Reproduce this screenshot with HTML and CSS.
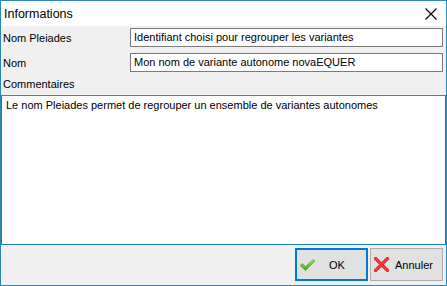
FILE: index.html
```html
<!DOCTYPE html>
<html>
<head>
<meta charset="utf-8">
<link rel="stylesheet" href="styles.css">
</head>
<body>
<div class="window">
  <div class="titlebar">
    <span class="title">Informations</span>
    <svg class="close" width="12" height="12" viewBox="0 0 12 12"><path d="M0.5 0.5 L11.5 11.5 M11.5 0.5 L0.5 11.5" stroke="#000" stroke-width="1.1" fill="none"/></svg>
  </div>
  <div class="content">
    <div class="row">
      <label class="label">Nom Pleiades</label>
      <div class="input">Identifiant choisi pour regrouper les variantes</div>
    </div>
    <div class="row">
      <label class="label">Nom</label>
      <div class="input">Mon nom de variante autonome novaEQUER</div>
    </div>
    <div class="comment-label">Commentaires</div>
    <div class="textarea">Le nom Pleiades permet de regrouper un ensemble de variantes autonomes</div>
    <div class="footer">
      <button class="btn btn-default">
        <svg class="icon" width="17" height="14" viewBox="0 0 17 14">
          <defs><linearGradient id="g" x1="0" y1="0" x2="0" y2="1"><stop offset="0" stop-color="#a8e84a"/><stop offset="1" stop-color="#3aa51a"/></linearGradient></defs>
          <path d="M1 7.5 L3.5 5.5 L6.5 8.5 L14 1.5 L16 3 L6.5 12.5 Z" fill="url(#g)" stroke="#4aa02a" stroke-width="0.6"/>
        </svg>
        <span class="btn-text ok">OK</span>
      </button>
      <button class="btn">
        <svg class="icon" width="15" height="15" viewBox="0 0 15 15">
          <path d="M1.5 1.5 L13.5 13.5 M13.5 1.5 L1.5 13.5" stroke="#e8262a" stroke-width="3.2" stroke-linecap="round" fill="none"/>
          <path d="M1.5 1.5 L13.5 13.5 M13.5 1.5 L1.5 13.5" stroke="#ff6a5e" stroke-width="1" stroke-linecap="round" fill="none" opacity="0.6"/>
        </svg>
        <span class="btn-text">Annuler</span>
      </button>
    </div>
  </div>
</div>
</body>
</html>
```
FILE: styles.css
```css
* { box-sizing: border-box; }
html, body { margin: 0; padding: 0; }
body {
  width: 447px;
  height: 286px;
  font-family: "Liberation Sans", Arial, sans-serif;
  font-size: 11px;
  color: #000;
  overflow: hidden;
}
.window {
  width: 447px;
  height: 286px;
  border: 1px solid #2e86b8;
  display: flex;
  flex-direction: column;
  background: #f0f0f0;
}
.titlebar {
  height: 25px;
  background: #fff;
  display: flex;
  align-items: center;
  justify-content: space-between;
  padding: 0 9px 0 3px;
  flex: none;
}
.title {
  font-size: 12.5px;
  color: #000;
  padding-top: 1px;
}
.close { display: block; margin-top: 1px; }
.content {
  flex: 1;
  display: flex;
  flex-direction: column;
  padding-top: 2px;
}
.row {
  display: grid;
  grid-template-columns: 129px 1fr;
  align-items: center;
  padding-right: 3px;
  margin-bottom: 6px;
}
.label { padding-left: 2px; }
.input {
  height: 19px;
  border: 1px solid #7a7a7a;
  background: #fff;
  padding: 0 3px;
  line-height: 17px;
  white-space: nowrap;
  overflow: hidden;
}
.comment-label {
  margin-top: -1px;
  height: 18px;
  line-height: 15px;
  padding-left: 2px;
}
.textarea {
  flex: 1;
  background: #fff;
  border: 1px solid #1b7cc4;
  border-top-color: #5b7e99;
  padding: 3px 4px;
  line-height: 13px;
}
.footer {
  height: 40px;
  flex: none;
  display: flex;
  justify-content: flex-end;
  align-items: flex-start;
  gap: 2px;
  padding: 3px 3px 0 0;
}
.btn {
  width: 73px;
  height: 33px;
  border: 1px solid #adadad;
  background: #e1e1e1;
  font-family: "Liberation Sans", Arial, sans-serif;
  font-size: 11px;
  color: #000;
  display: flex;
  align-items: center;
  padding: 0 0 0 3px;
  margin: 0;
}
.btn-default {
  border: 2px solid #0078d7;
  padding-left: 2px;
}
.icon { display: block; flex: none; }
.btn-text { flex: 1; text-align: center; padding-right: 3px; }
.btn-text.ok { padding-right: 8px; }
```
